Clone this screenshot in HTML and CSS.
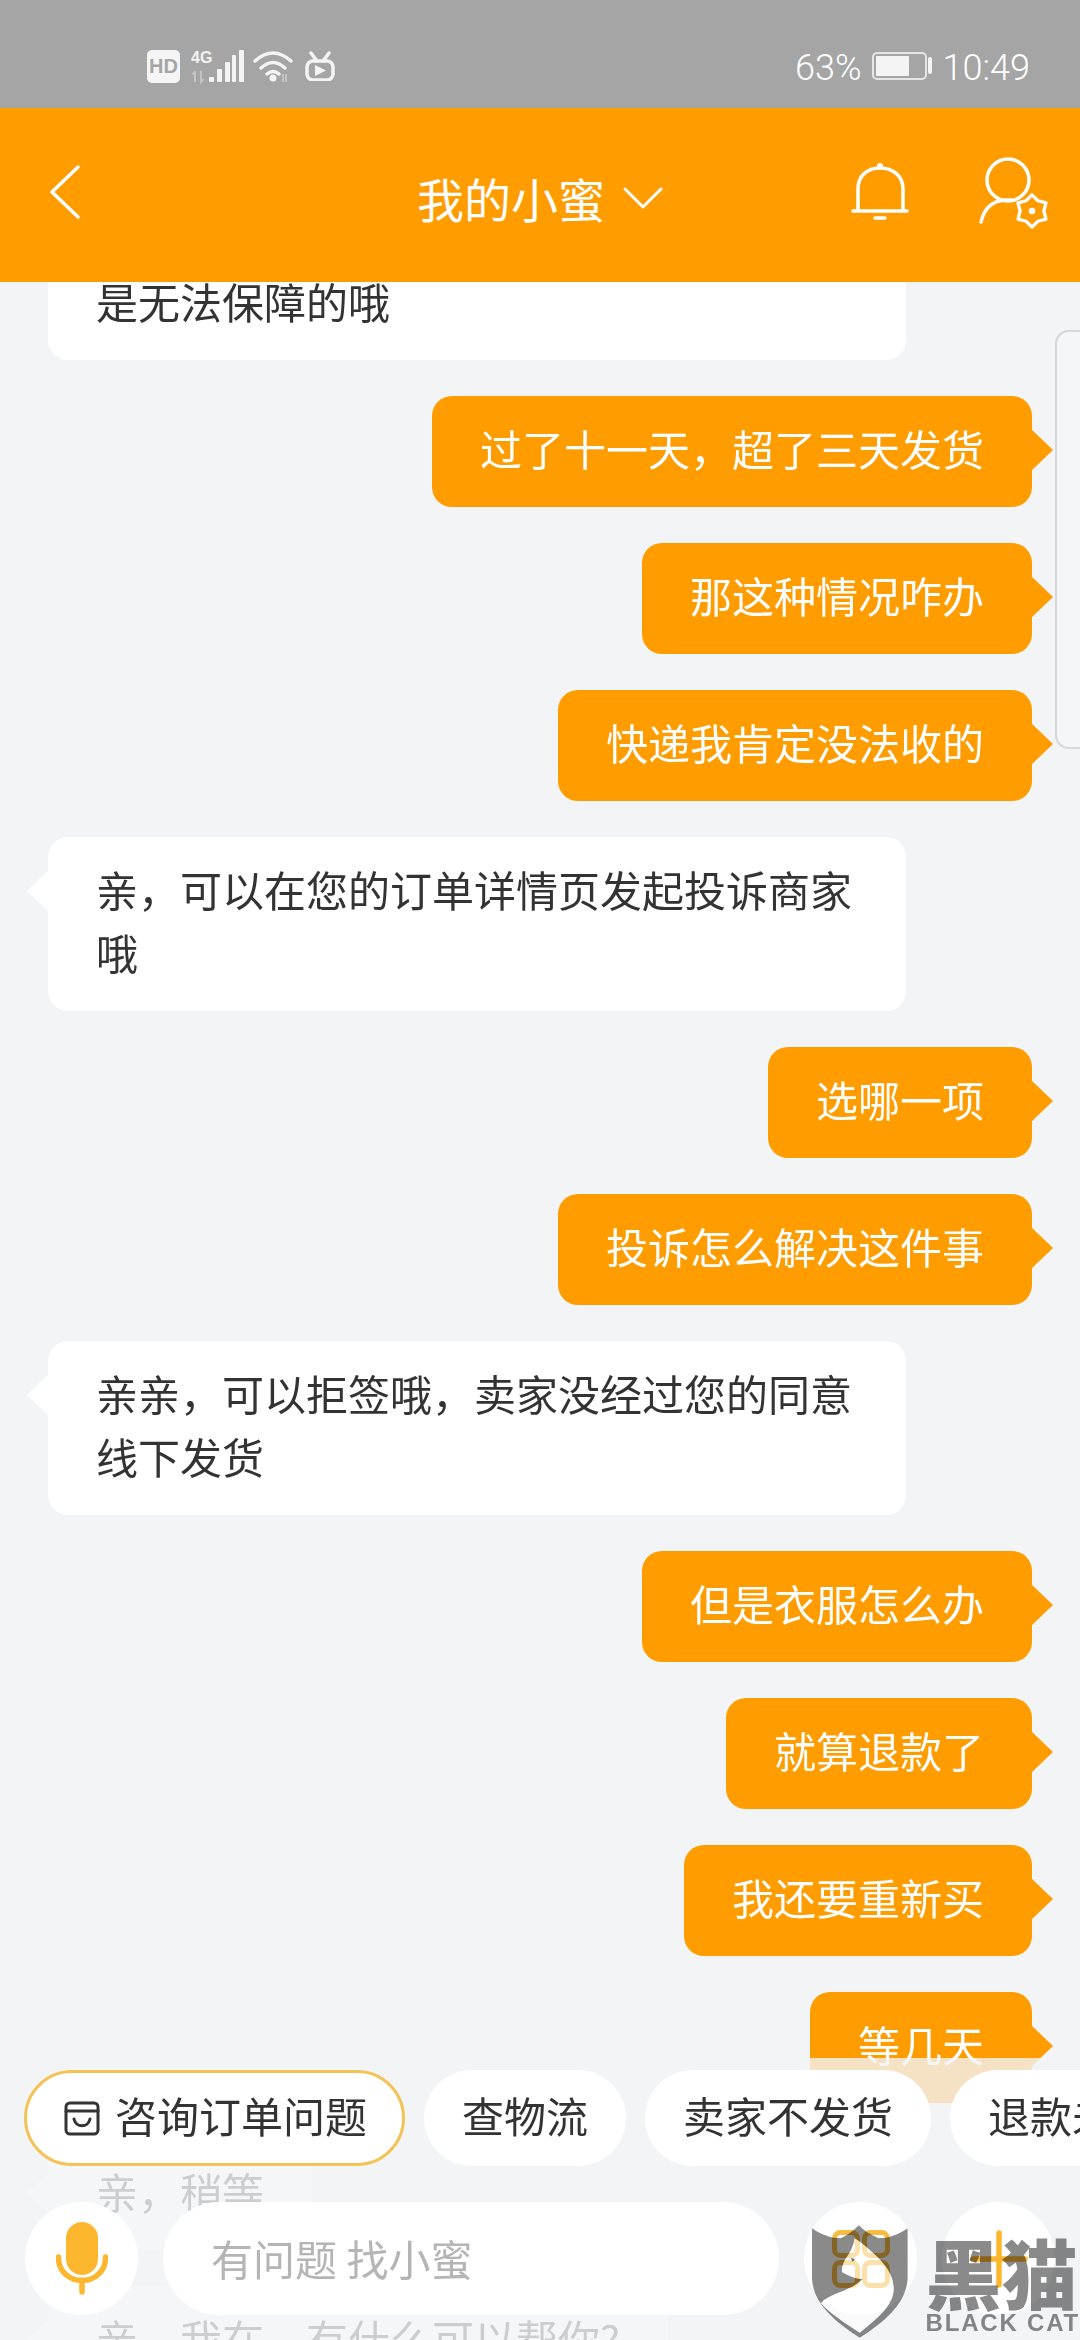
FILE: index.html
```html
<!DOCTYPE html>
<html lang="zh-CN">
<head>
<meta charset="utf-8">
<title>我的小蜜</title>
<link rel="stylesheet" href="styles.css">
</head>
<body>
<div class="app">
  <div class="statusbar">
    <div class="status-left">
      <span class="hd">HD</span>
      <svg class="ic-signal" width="54" height="36" viewBox="0 0 54 36">
        <text class="net" x="0" y="15">4G</text>
        <g class="solid">
          <rect x="18" y="29" width="5" height="5" rx="1"/><rect x="26" y="21" width="5" height="13" rx="1"/><rect x="34" y="14" width="5" height="20" rx="1"/><rect x="41" y="7" width="4" height="27" rx="1"/><rect x="48" y="2" width="5" height="32" rx="1"/>
        </g>
        <path class="faint" d="M4 23V34M1.500 26.500L4 23M10 23V34L12.500 31"/>
      </svg>
      <svg class="ic-wifi" width="40" height="32" viewBox="0 0 40 32">
        <path class="wifi-arc" d="M2 11Q20-5 38 11M8 18Q20 7 32 18M14 24Q20 19 26 24"/>
        <circle class="solid" cx="20" cy="28" r="3.500"/>
        <path class="faint" d="M30 24V32M33 24V32"/>
      </svg>
      <svg class="ic-tv" width="30" height="30" viewBox="0 0 30 30">
        <path class="tv-line" d="M6 2L12 10M24 2L18 10"/>
        <rect class="tv-line" x="2" y="10" width="26" height="19" rx="6"/>
        <path class="solid" d="M10 14V25L21 19.500Z"/>
      </svg>
    </div>
    <div class="status-right">
      <span class="stat">63%</span>
      <svg class="ic-batt" width="61" height="30" viewBox="0 0 61 30">
        <rect class="batt-frame" x="1" y="2" width="53" height="26" rx="4"/>
        <rect class="solid" x="4" y="5" width="33" height="20" rx="1"/>
        <rect class="solid" x="56" y="6" width="4" height="17" rx="2"/>
      </svg>
      <span class="stat">10:49</span>
    </div>
  </div>

  <header class="topbar">
    <div class="top-left">
      <svg width="32" height="56" viewBox="0 0 32 56"><path class="hd-line" d="M29 3L3 28L29 53"/></svg>
    </div>
    <div class="title">
      <span>我的小蜜</span>
      <svg width="40" height="22" viewBox="0 0 40 22"><path class="hd-thin" d="M2 2L20 20L38 2"/></svg>
    </div>
    <div class="top-right">
      <svg width="58" height="60" viewBox="0 0 58 60">
        <path class="hd-line" d="M7 49V27C7 14 16 6 29 6C42 6 52 14 52 27V49M2 49H56M24 56H34"/>
        <circle class="hd-fill" cx="29" cy="4" r="3"/>
      </svg>
      <svg width="74" height="76" viewBox="0 0 74 76">
        <circle class="hd-line" cx="32" cy="26" r="21"/>
        <path class="hd-line" d="M5 68C8 55 16 47 29 46H36"/>
        <g transform="translate(56 57) rotate(90) scale(1.080)">
          <path class="hd-gear" d="M15 0L9.500 5.500L7.500 13L0 11L-7.500 13L-9.500 5.500L-15 0L-9.500-5.500L-7.500-13L0-11L7.500-13L9.500-5.500Z"/>
          <circle class="hd-fill" r="3"/>
        </g>
      </svg>
    </div>
  </header>

  <main class="chat">
    <div class="msg them first">是无法保障的哦</div>
    <div class="msg me">过了十一天，超了三天发货</div>
    <div class="msg me">那这种情况咋办</div>
    <div class="msg me">快递我肯定没法收的</div>
    <div class="msg them">亲，可以在您的订单详情页发起投诉商家哦</div>
    <div class="msg me">选哪一项</div>
    <div class="msg me">投诉怎么解决这件事</div>
    <div class="msg them">亲亲，可以拒签哦，卖家没经过您的同意线下发货</div>
    <div class="msg me">但是衣服怎么办</div>
    <div class="msg me">就算退款了</div>
    <div class="msg me">我还要重新买</div>
    <div class="msg me">等几天</div>
    <div class="msg them">亲，稍等</div>
    <div class="msg them">亲，我在，有什么可以帮你?</div>
  </main>

  <div class="scroll-tab"></div>

  <section class="dock">
    <div class="chips">
      <div class="chip active">
        <svg class="chip-ic" width="36" height="36" viewBox="0 0 36 36">
          <rect class="ink" x="2" y="3" width="32" height="31" rx="4"/>
          <path class="ink" d="M2 11H34M10 19C12 28 24 28 26 19"/>
        </svg>
        <span>咨询订单问题</span>
      </div>
      <div class="chip">查物流</div>
      <div class="chip">卖家不发货</div>
      <div class="chip">退款未到账</div>
    </div>
    <div class="inputrow">
      <div class="round">
        <svg width="52" height="73" viewBox="30 20 52 73">
          <rect class="mic" x="40" y="20" width="32" height="53" rx="16"/>
          <path class="mic-line" d="M32.500 55V56C32.500 70 44 78.500 56 78.500C68 78.500 79.500 70 79.500 56V55M56 78V90"/>
        </svg>
      </div>
      <div class="field">有问题 找小蜜</div>
      <div class="round">
        <svg width="58" height="58" viewBox="0 0 58 58">
          <rect class="grid-sq" x="2.500" y="2.500" width="23" height="23" rx="6"/>
          <rect class="grid-sq" x="32.500" y="2.500" width="23" height="23" rx="6"/>
          <rect class="grid-sq" x="2.500" y="32.500" width="23" height="23" rx="6"/>
          <rect class="grid-sq" x="32.500" y="32.500" width="23" height="23" rx="6"/>
        </svg>
      </div>
      <div class="round">
        <svg width="58" height="58" viewBox="0 0 58 58"><path class="mic-line" d="M29 3V55M3 29H55"/></svg>
      </div>
    </div>
  </section>

  <div class="watermark">
    <svg width="100" height="117" viewBox="810 2223 100 117">
      <path class="shield" fill-rule="evenodd" d="M812 2228C822 2235 832 2238 841 2238C848 2235 854 2230 859 2225C864 2230 871 2235 879 2238C888 2238 898 2235 908 2228V2277C908 2305 880 2325 860 2338C840 2325 812 2305 812 2277ZM855 2238L862 2243C880 2258 893 2270 894 2287C895 2305 878 2318 860 2333C845 2323 828 2312 821 2303C830 2293 850 2292 863 2279C856 2279 849 2276 842 2272C842 2266 844 2261 847 2257C851 2251 854 2245 855 2238Z"/>
      <path class="fox" d="M855 2238L862 2243C880 2258 893 2270 894 2287C895 2305 878 2318 860 2333C845 2323 828 2312 821 2303C830 2293 850 2292 863 2279C856 2279 849 2276 842 2272C842 2266 844 2261 847 2257C851 2251 854 2245 855 2238Z"/>
      <path class="eye" d="M851 2258L855 2259L853 2262Z"/>
    </svg>
    <div class="brand">
      <div class="brand-cn">黑猫</div>
      <div class="brand-en">BLACK CAT</div>
    </div>
  </div>
</div>
</body>
</html>
```

FILE: styles.css
```css
* { box-sizing: border-box; }
html, body { margin: 0; padding: 0; }
body { font-family: "Noto Sans CJK SC", "Noto Sans", sans-serif; background: #f2f4f6; }

.app {
  position: relative;
  width: 1080px;
  height: 2340px;
  overflow: hidden;
  display: flex;
  flex-direction: column;
  background: #f2f4f6;
}

/* status bar */
.statusbar {
  flex: 0 0 108px;
  background: #a5a5a5;
  display: flex;
  justify-content: space-between;
  align-items: center;
  padding: 24px 50px 0 147px;
  position: relative;
  z-index: 3;
}
.status-left { display: flex; align-items: center; }
.status-right { display: flex; align-items: center; gap: 10px; }
.hd {
  width: 33px;
  height: 33px;
  border-radius: 5px;
  background: #f5f5f5;
  color: #a5a5a5;
  font: 700 20px/33px "Liberation Sans", sans-serif;
  text-align: center;
}
.ic-signal { margin-left: 11px; }
.ic-wifi { margin-left: 8px; }
.ic-tv { margin-left: 12px; }
.net { font: 700 16px "Liberation Sans", sans-serif; fill: #f2f2f2; }
.solid { fill: #f4f4f4; }
.faint { fill: none; stroke: #c4c4c4; stroke-width: 2; }
.wifi-arc { fill: none; stroke: #f4f4f4; stroke-width: 3.5; stroke-linecap: round; }
.tv-line { fill: none; stroke: #f4f4f4; stroke-width: 3.5; stroke-linecap: round; }
.batt-frame { fill: none; stroke: #e6e6e6; stroke-width: 2; }
.stat { font: 300 36px/1 Roboto, sans-serif; color: #fff; padding-top: 4px; }

/* top bar */
.topbar {
  flex: 0 0 174px;
  background: #ff9c00;
  display: grid;
  grid-template-columns: 1fr auto 1fr;
  align-items: center;
  position: relative;
  z-index: 3;
  padding-bottom: 6px;
}
.top-left { padding-left: 49px; display: flex; }
.top-right { display: flex; justify-content: flex-end; align-items: center; gap: 67px; padding-right: 30px; }
.title {
  display: flex;
  align-items: center;
  gap: 18px;
  color: #fff;
  font-size: 47px;
  line-height: 60px;
  padding-top: 12px;
}
.hd-line { fill: none; stroke: #fff; stroke-width: 3.5; stroke-linecap: round; stroke-linejoin: round; }
.hd-thin { fill: none; stroke: #fff; stroke-width: 3; stroke-linecap: round; stroke-linejoin: round; }
.hd-gear { fill: none; stroke: #fff; stroke-width: 3; stroke-linejoin: round; }
.hd-fill { fill: #fff; }

/* chat */
.chat {
  flex: 1 1 0;
  min-height: 0;
  overflow: hidden;
  display: flex;
  flex-direction: column;
  align-items: flex-start;
  gap: 36px;
  padding: 0 48px;
}
.msg {
  position: relative;
  flex: none;
  max-width: 858px;
  padding: 20px 48px 28px;
  border-radius: 20px;
  font-size: 42px;
  line-height: 63px;
}
.msg::after {
  content: "";
  position: absolute;
  top: 33px;
  width: 22px;
  height: 42px;
}
.me { align-self: flex-end; background: #ff9c00; color: #fff; }
.me::after { right: -21px; background: #ff9c00; clip-path: polygon(0 0, 100% 50%, 0 100%); }
.them { background: #fff; color: #333; }
.them::after { left: -21px; background: #fff; clip-path: polygon(100% 0, 0 50%, 100% 100%); }
.first { margin-top: -33px; width: 858px; }
.first::after { display: none; }

.scroll-tab {
  position: absolute;
  left: 1055px;
  top: 330px;
  width: 40px;
  height: 419px;
  border: 2px solid #d3d6da;
  border-radius: 14px;
  background: #f5f6f8;
}

/* bottom dock */
.dock {
  position: absolute;
  left: 0;
  right: 0;
  bottom: 0;
  height: 282px;
  padding-top: 12px;
  background: rgba(242, 244, 246, 0.8);
  display: flex;
  flex-direction: column;
  gap: 36px;
}
.chips { display: flex; gap: 19px; padding-left: 24px; overflow: hidden; }
.chip {
  flex: none;
  height: 96px;
  padding: 0 38px 6px;
  border-radius: 48px;
  background: #fff;
  color: #333;
  font-size: 42px;
  line-height: 90px;
  white-space: nowrap;
}
.active {
  display: flex;
  align-items: center;
  gap: 15px;
  padding: 0 35px 6px 37px;
  border: 3px solid #f4c355;
}
.chip-ic { margin-top: 6px; }
.ink { fill: none; stroke: #333; stroke-width: 3; stroke-linecap: round; }

.inputrow { display: flex; gap: 25px; padding: 0 25px; }
.round {
  flex: 0 0 113px;
  height: 113px;
  border-radius: 50%;
  background: #fff;
  display: flex;
  align-items: center;
  justify-content: center;
}
.field {
  flex: 1 1 0;
  height: 113px;
  border-radius: 57px;
  background: #fff;
  color: #b5b5b5;
  font-size: 42px;
  line-height: 111px;
  padding-left: 48px;
}
.mic { fill: #fdb72e; }
.mic-line { fill: none; stroke: #fdb72e; stroke-width: 5.5; stroke-linecap: round; }
.grid-sq { fill: none; stroke: #f6bb45; stroke-width: 5; }

/* watermark */
.watermark {
  position: absolute;
  right: 0;
  bottom: 0;
  width: 270px;
  height: 117px;
  display: flex;
  gap: 16px;
}
.shield { fill: #8a8a8a; mix-blend-mode: multiply; }
.fox { fill: rgba(255, 255, 255, 0.55); }
.eye { fill: #666; }
.brand { mix-blend-mode: multiply; color: #8a8a8a; white-space: nowrap; padding-top: 8px; }
.brand-cn { font-size: 76px; line-height: 80px; font-weight: 900; height: 80px; }
.brand-en { font: 700 24px/24px "Liberation Sans", sans-serif; letter-spacing: 1.800px; }
```
